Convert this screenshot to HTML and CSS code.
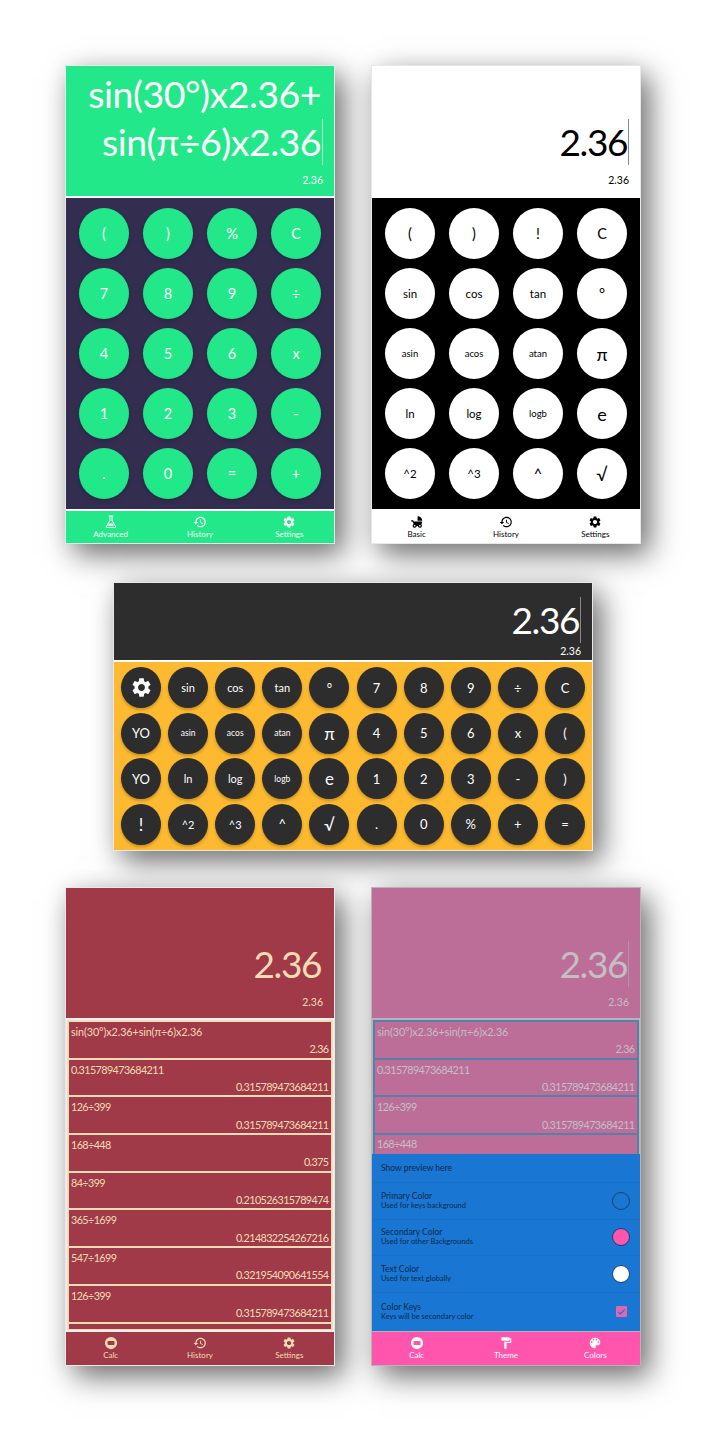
FILE: index.html
```html
<!DOCTYPE html>
<html lang="en">
<head>
  <meta charset="UTF-8">
  <meta name="viewport" content="width=device-width, initial-scale=1.0">
  <title>Calculator themes</title>
  <link rel="stylesheet" href="styles.css">
</head>
<body>
  <svg class="defs" width="0" height="0">
    <symbol id="i-gear" viewBox="0 0 24 24"><path d="M19.14 12.94c.04-.3.06-.61.06-.94 0-.32-.02-.64-.07-.94l2.03-1.58c.18-.14.23-.41.12-.61l-1.92-3.32c-.12-.22-.37-.29-.59-.22l-2.39.96c-.5-.38-1.03-.7-1.62-.94l-.36-2.54c-.04-.24-.24-.41-.48-.41h-3.84c-.24 0-.43.17-.47.41l-.36 2.54c-.59.24-1.13.57-1.62.94l-2.39-.96c-.22-.08-.47 0-.59.22L2.74 8.87c-.12.21-.08.47.12.61l2.03 1.58c-.05.3-.09.63-.09.94s.02.64.07.94l-2.03 1.58c-.18.14-.23.41-.12.61l1.92 3.32c.12.22.37.29.59.22l2.39-.96c.5.38 1.03.7 1.62.94l.36 2.54c.05.24.24.41.48.41h3.84c.24 0 .44-.17.47-.41l.36-2.54c.59-.24 1.13-.56 1.62-.94l2.39.96c.22.08.47 0 .59-.22l1.92-3.32c.12-.22.07-.47-.12-.61l-2.01-1.58zM12 15.6c-1.98 0-3.6-1.62-3.6-3.6s1.62-3.6 3.6-3.6 3.6 1.62 3.6 3.6-1.62 3.6-3.6 3.6z"/></symbol>
    <symbol id="i-history" viewBox="0 0 24 24"><path d="M13 3c-4.97 0-9 4.03-9 9H1l3.89 3.89.07.14L9 12H6c0-3.87 3.13-7 7-7s7 3.13 7 7-3.13 7-7 7c-1.93 0-3.68-.79-4.94-2.06l-1.42 1.42C8.27 19.99 10.51 21 13 21c4.97 0 9-4.03 9-9s-4.03-9-9-9zm-1 5v5l4.28 2.54.72-1.21-3.5-2.08V8H12z"/></symbol>
    <symbol id="i-flask" viewBox="0 0 24 24"><path fill-rule="evenodd" d="M8 1h8v1.700h-1.300v6.700l6.100 10.200c.7 1.200-.2 2.400-1.500 2.400H4.700c-1.300 0-2.200-1.200-1.500-2.400l6.100-10.200V2.700H8V1zm3 1.700v7.200L5 19.900c-.2.300 0 .5.300.5h13.400c.3 0 .5-.2.300-.5L13 9.900V2.700h-2zM9 14.500h6l2.200 3.900H6.800L9 14.500z"/></symbol>
    <symbol id="i-stroller" viewBox="0 0 24 24"><path d="M13 2v8h8c0-4.420-3.580-8-8-8zm6.320 13.890C20.370 14.540 21 12.840 21 11H6.440l-.95-2H2v2h2.220s1.890 4.070 2.120 4.420c-1.100.59-1.840 1.750-1.840 3.080C4.500 20.430 6.070 22 8 22c1.760 0 3.220-1.300 3.460-3h2.080c.24 1.700 1.700 3 3.460 3 1.930 0 3.500-1.570 3.500-3.500 0-1.040-.46-1.970-1.180-2.610zM8 20c-.83 0-1.500-.67-1.500-1.500S7.170 17 8 17s1.500.67 1.500 1.500S8.830 20 8 20zm9 0c-.83 0-1.500-.67-1.500-1.500S16.170 17 17 17s1.500.67 1.500 1.500S17.830 20 17 20z"/></symbol>
    <symbol id="i-calc" viewBox="0 0 24 24"><path fill-rule="evenodd" d="M12 1.500a10.500 10.500 0 1 0 0 21 10.500 10.500 0 0 0 0-21zM7.500 8.500h9c.8 0 1.500.7 1.500 1.500v4c0 .8-.7 1.500-1.500 1.500h-9C6.700 15.500 6 14.800 6 14v-4c0-.8.700-1.500 1.500-1.500z"/></symbol>
    <symbol id="i-paint" viewBox="0 0 24 24"><path d="M18 4V3c0-.55-.45-1-1-1H5c-.55 0-1 .45-1 1v4c0 .55.45 1 1 1h12c.55 0 1-.45 1-1V6h1v4H9v11c0 .55.45 1 1 1h2c.55 0 1-.45 1-1v-9h8V4h-3z"/></symbol>
    <symbol id="i-palette" viewBox="0 0 24 24"><path d="M12 3c-4.970 0-9 4.030-9 9s4.030 9 9 9c.83 0 1.500-.67 1.500-1.500 0-.39-.15-.74-.39-1.010-.23-.26-.38-.61-.38-.99 0-.83.67-1.500 1.500-1.500H16c2.760 0 5-2.240 5-5 0-4.420-4.030-8-9-8zm-5.500 9c-.83 0-1.500-.67-1.500-1.500S5.670 9 6.500 9 8 9.670 8 10.500 7.330 12 6.500 12zm3-4C8.670 8 8 7.330 8 6.500S8.670 5 9.500 5s1.500.67 1.500 1.500S10.330 8 9.500 8zm5 0c-.83 0-1.500-.67-1.500-1.500S13.670 5 14.500 5s1.500.67 1.500 1.500S15.330 8 14.500 8zm3 4c-.83 0-1.500-.67-1.500-1.500S16.670 9 17.500 9s1.500.67 1.500 1.500-.67 1.500-1.500 1.500z"/></symbol>
  </svg>

  <div class="row">
    <section class="phone green">
      <div class="screen">
        <div class="expr long"><span>sin(30°)x2.36+</span><span class="caret">sin(π÷6)x2.36</span></div>
        <div class="result">2.36</div>
      </div>
      <div class="keys">
        <button class="key">(</button><button class="key">)</button><button class="key">%</button><button class="key">C</button>
        <button class="key">7</button><button class="key">8</button><button class="key">9</button><button class="key">÷</button>
        <button class="key">4</button><button class="key">5</button><button class="key">6</button><button class="key">x</button>
        <button class="key">1</button><button class="key">2</button><button class="key">3</button><button class="key">-</button>
        <button class="key">.</button><button class="key">0</button><button class="key">=</button><button class="key">+</button>
      </div>
      <nav class="tabs">
        <a class="tab"><svg><use href="#i-flask"/></svg><span>Advanced</span></a>
        <a class="tab"><svg><use href="#i-history"/></svg><span>History</span></a>
        <a class="tab"><svg><use href="#i-gear"/></svg><span>Settings</span></a>
      </nav>
    </section>

    <section class="phone mono">
      <div class="screen">
        <div class="expr"><span class="caret">2.36</span></div>
        <div class="result">2.36</div>
      </div>
      <div class="keys">
        <button class="key">(</button><button class="key">)</button><button class="key">!</button><button class="key">C</button>
        <button class="key small">sin</button><button class="key small">cos</button><button class="key small">tan</button><button class="key">°</button>
        <button class="key tiny">asin</button><button class="key tiny">acos</button><button class="key tiny">atan</button><button class="key big">π</button>
        <button class="key small">ln</button><button class="key small">log</button><button class="key tiny">logb</button><button class="key big">e</button>
        <button class="key small">^2</button><button class="key small">^3</button><button class="key">^</button><button class="key big">√</button>
      </div>
      <nav class="tabs">
        <a class="tab"><svg><use href="#i-stroller"/></svg><span>Basic</span></a>
        <a class="tab"><svg><use href="#i-history"/></svg><span>History</span></a>
        <a class="tab"><svg><use href="#i-gear"/></svg><span>Settings</span></a>
      </nav>
    </section>
  </div>

  <div class="row">
    <section class="phone wide">
      <div class="screen">
        <div class="expr"><span class="caret">2.36</span></div>
        <div class="result">2.36</div>
      </div>
      <div class="keys">
        <button class="key"><svg class="key-icon"><use href="#i-gear"/></svg></button><button class="key small">sin</button><button class="key small">cos</button><button class="key small">tan</button><button class="key">°</button><button class="key">7</button><button class="key">8</button><button class="key">9</button><button class="key">÷</button><button class="key">C</button>
        <button class="key">YO</button><button class="key tiny">asin</button><button class="key tiny">acos</button><button class="key tiny">atan</button><button class="key big">π</button><button class="key">4</button><button class="key">5</button><button class="key">6</button><button class="key">x</button><button class="key">(</button>
        <button class="key">YO</button><button class="key small">ln</button><button class="key small">log</button><button class="key tiny">logb</button><button class="key big">e</button><button class="key">1</button><button class="key">2</button><button class="key">3</button><button class="key">-</button><button class="key">)</button>
        <button class="key big">!</button><button class="key small">^2</button><button class="key small">^3</button><button class="key">^</button><button class="key big">√</button><button class="key">.</button><button class="key">0</button><button class="key">%</button><button class="key">+</button><button class="key">=</button>
      </div>
    </section>
  </div>

  <div class="row">
    <section class="phone wine">
      <div class="screen">
        <div class="expr"><span>2.36</span></div>
        <div class="result">2.36</div>
      </div>
      <div class="history">
        <div class="entry"><p class="formula">sin(30°)x2.36+sin(π÷6)x2.36</p><p class="answer">2.36</p></div>
        <div class="entry"><p>0.315789473684211</p><p class="answer">0.315789473684211</p></div>
        <div class="entry"><p>126÷399</p><p class="answer">0.315789473684211</p></div>
        <div class="entry"><p>168÷448</p><p class="answer">0.375</p></div>
        <div class="entry"><p>84÷399</p><p class="answer">0.210526315789474</p></div>
        <div class="entry"><p>365÷1699</p><p class="answer">0.214832254267216</p></div>
        <div class="entry"><p>547÷1699</p><p class="answer">0.321954090641554</p></div>
        <div class="entry"><p>126÷399</p><p class="answer">0.315789473684211</p></div>
        <div class="entry stub"></div>
      </div>
      <nav class="tabs">
        <a class="tab"><svg><use href="#i-calc"/></svg><span>Calc</span></a>
        <a class="tab"><svg><use href="#i-history"/></svg><span>History</span></a>
        <a class="tab"><svg><use href="#i-gear"/></svg><span>Settings</span></a>
      </nav>
    </section>

    <section class="phone pink">
      <div class="screen">
        <div class="expr"><span class="caret">2.36</span></div>
        <div class="result">2.36</div>
      </div>
      <div class="history">
        <div class="entry"><p class="formula">sin(30°)x2.36+sin(π÷6)x2.36</p><p class="answer">2.36</p></div>
        <div class="entry"><p>0.315789473684211</p><p class="answer">0.315789473684211</p></div>
        <div class="entry"><p>126÷399</p><p class="answer">0.315789473684211</p></div>
        <div class="entry stub"><p>168÷448</p></div>
      </div>
      <div class="options">
        <div class="option preview">Show preview here</div>
        <div class="option"><div><b>Primary Color</b><small>Used for keys background</small></div><i class="swatch"></i></div>
        <div class="option"><div><b>Secondary Color</b><small>Used for other Backgrounds</small></div><i class="swatch hot"></i></div>
        <div class="option"><div><b>Text Color</b><small>Used for text globally</small></div><i class="swatch white"></i></div>
        <div class="option check-row"><div><b>Color Keys</b><small>Keys will be secondary color</small></div>
          <span class="check"><svg viewBox="0 0 12 12"><path d="M2.500 6.500l2.300 2.200 4.700-5"/></svg></span></div>
      </div>
      <nav class="tabs">
        <a class="tab"><svg><use href="#i-calc"/></svg><span>Calc</span></a>
        <a class="tab"><svg><use href="#i-paint"/></svg><span>Theme</span></a>
        <a class="tab"><svg><use href="#i-palette"/></svg><span>Colors</span></a>
      </nav>
    </section>
  </div>
</body>
</html>
```

FILE: styles.css
```css
* {
  box-sizing: border-box;
}

body {
  margin: 0;
  padding-top: 65px;
  width: 726px;
  height: 1452px;
  overflow: hidden;
  background-color: #fff;
  font-family: "Lato", "Open Sans", sans-serif;
}

.defs {
  position: absolute;
}

.row {
  display: flex;
  gap: 36px;
  padding-left: 65px;
  margin-bottom: 38px;
}

.row:nth-child(3) {
  padding-left: 113px;
  margin-bottom: 36px;
}

/* phone frame */
.phone {
  display: flex;
  flex-direction: column;
  width: 270px;
  height: 479px;
  border: 1px solid #e8e8e8;
  box-shadow: 0 0 22px rgba(0, 0, 0, 0.06), 9px 11px 28px rgba(0, 0, 0, 0.55);
  color: var(--text);
  background-color: var(--border);
}

.screen {
  display: flex;
  flex-direction: column;
  justify-content: flex-end;
  height: 130px;
  flex: none;
  padding-right: 11px;
  text-align: right;
  background-color: var(--screen);
}

.expr {
  display: flex;
  flex-direction: column;
  align-items: flex-end;
  font-size: 37px;
  line-height: 46px;
  letter-spacing: -1.400px;
}

.expr span {
  padding-right: 1px;
  border-right: 1px solid transparent;
}

.expr.long {
  gap: 2px;
  font-size: 37.500px;
  letter-spacing: -0.500px;
}

.expr .caret {
  border-right-color: var(--caret);
}

.result {
  height: 31px;
  padding-top: 9px;
  font-size: 10.500px;
  line-height: 13px;
}

.keys {
  display: grid;
  grid-template-columns: repeat(4, 50px);
  grid-auto-rows: 51px;
  justify-content: space-between;
  align-content: space-between;
  height: 311px;
  flex: none;
  margin-top: 2px;
  padding: 10px 13px;
  background-color: var(--pad);
}

.key {
  display: flex;
  align-items: center;
  justify-content: center;
  padding: 0;
  border: none;
  border-radius: 50%;
  font-family: inherit;
  font-size: 14.500px;
  color: var(--key-text);
  background-color: var(--key);
  box-shadow: 0 2px 4px rgba(0, 0, 0, 0.18);
}

.key.small {
  font-size: 11.500px;
}

.key.tiny {
  font-size: 9.500px;
}

.key.big {
  font-size: 18px;
}

.key-icon {
  width: 23px;
  height: 23px;
  fill: currentColor;
}

.tabs {
  display: grid;
  grid-template-columns: 1fr 1fr 1fr;
  height: 32px;
  flex: none;
  margin-top: 2px;
  background-color: var(--bar);
}

.tab {
  display: flex;
  flex-direction: column;
  align-items: center;
  padding-top: 4px;
  font-size: 8px;
  line-height: 10px;
  color: var(--bar-text);
}

.tab svg {
  width: 14px;
  height: 14px;
  fill: currentColor;
}

/* history list */
.history {
  display: flex;
  flex-direction: column;
  gap: 2px;
  height: 310px;
  flex: none;
  overflow: hidden;
  margin: 2px 1px 0;
  padding: 2px 2px 1px;
  background-color: var(--rule);
}

.entry {
  flex: none;
  height: 35.700px;
  padding: 3px 0 0 2px;
  font-size: 10.800px;
  background-color: var(--screen);
}

.entry p {
  margin: 0;
  line-height: 14px;
  letter-spacing: -0.600px;
}

.entry .formula {
  letter-spacing: -0.100px;
}

.entry .answer {
  margin-top: 3.300px;
  padding-right: 2.500px;
  text-align: right;
}

.entry.stub {
  flex: 1;
  height: auto;
  padding-top: 2px;
}

.wine .tabs,
.pink .tabs {
  height: 33px;
}

/* colour settings */
.options {
  display: flex;
  flex-direction: column;
  height: 177px;
  flex: none;
  color: #0d2a4a;
  background-color: #1976d2;
}

.option {
  display: flex;
  align-items: center;
  justify-content: space-between;
  height: 36.600px;
  padding: 0 10px 0 9px;
  border-bottom: 1px solid #1a70c6;
}

.option.preview {
  height: 29px;
  font-size: 8.500px;
}

.option b {
  display: block;
  font-weight: 400;
  font-size: 8.500px;
  line-height: 10px;
}

.option small {
  display: block;
  font-size: 7.500px;
  line-height: 10px;
}

.swatch {
  width: 18px;
  height: 18px;
  border: 1px solid #16426f;
  border-radius: 50%;
}

.swatch.hot {
  background-color: #ff55ad;
}

.swatch.white {
  background-color: #fff;
}

.option.check-row {
  height: 38px;
  border-bottom: none;
}

.check {
  width: 11px;
  height: 11px;
  margin-right: 3px;
  border-radius: 1px;
  background-color: #e266ad;
}

.check svg {
  display: block;
  fill: none;
  stroke: #1976d2;
  stroke-width: 1.300;
}

/* themes */
.green {
  --screen: #22e88a;
  --pad: #332e50;
  --key: #22e88a;
  --key-text: #fff;
  --text: #fff;
  --bar: #22e88a;
  --bar-text: #fff;
  --border: #fff;
  --caret: #b5f3d3;
}

.mono {
  --screen: #fff;
  --pad: #000;
  --key: #fff;
  --key-text: #000;
  --text: #000;
  --bar: #fff;
  --bar-text: #000;
  --border: #fff;
  --caret: #888;
}

.wide {
  --screen: #2d2d2d;
  --pad: #fdb92f;
  --key: #2d2d2d;
  --key-text: #fff;
  --text: #fff;
  --border: #fff;
  --caret: #888;
  width: 480px;
  height: 269px;
}

.wide .screen {
  height: 77px;
}

.wide .result {
  height: 17px;
  padding-top: 2px;
}

.wide .keys {
  grid-template-columns: repeat(10, 40px);
  grid-auto-rows: 41px;
  height: 188px;
  padding: 5px 7px;
}

.wide .key {
  font-size: 13px;
  box-shadow: 0 2px 3px rgba(0, 0, 0, 0.22);
}

.wide .key.small {
  font-size: 11px;
}

.wide .key.tiny {
  font-size: 8.500px;
}

.wide .key.big {
  font-size: 17px;
}

.wine {
  --screen: #a03a48;
  --text: #f6dcb4;
  --bar: #a03a48;
  --bar-text: #f6dcb4;
  --border: #f0f0f0;
  --rule: #f6dcb4;
  --caret: #a03a48;
}

.pink {
  --screen: #bc6e98;
  --text: #c4bfc4;
  --bar: #ff55ad;
  --bar-text: #fff;
  --border: #b5b5b5;
  --rule: #5580aa;
  --caret: #a89aa8;
  border-color: #b5b5b5;
}

.pink .history {
  height: 134px;
  padding-bottom: 0;
}

.pink .tabs {
  margin-top: 1px;
}
```
